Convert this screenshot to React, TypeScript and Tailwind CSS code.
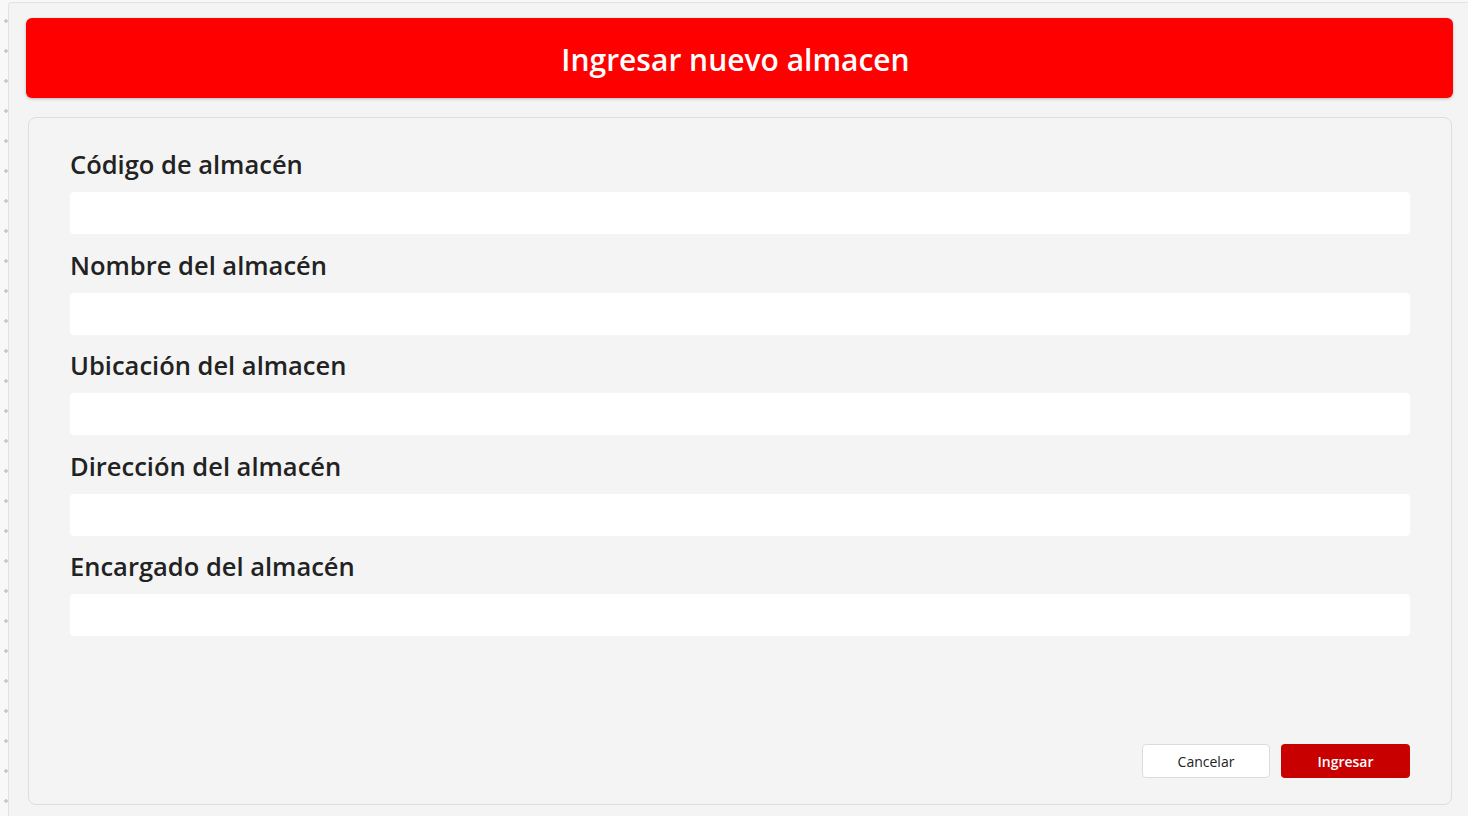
const fields = [
  "Código de almacén",
  "Nombre del almacén",
  "Ubicación del almacen",
  "Dirección del almacén",
  "Encargado del almacén",
];

export default function App() {
  return (
    <div className="h-[816px] w-full flex bg-[#f8f8f8] overflow-hidden font-['Open_Sans',sans-serif] pt-[2px]">
      {/* dotted ruler strip */}
      <div className="w-[8px] shrink-0 bg-[radial-gradient(circle,#c8c8c8_1.5px,transparent_2px)] bg-[length:12px_30px] bg-[position:0px_4px]" />

      <div className="flex-1 flex flex-col bg-[#f4f4f4] border-l border-t border-[#e2e2e2] rounded-tl-[4px] pt-[15px] pl-[17px] pr-[15px]">
        <div className="h-[80px] bg-[#ff0000] rounded-[6px] shadow-[0_1px_3px_rgba(0,0,0,0.25)] flex items-center justify-center pt-[3px] pr-[8px]">
          <h1 className="text-white text-[30px] font-semibold">Ingresar nuevo almacen</h1>
        </div>

        <div className="ml-[2px] mr-[1px] mt-[19px] h-[688px] border-[1.5px] border-[#dedede] rounded-[8px] bg-[#f4f4f4] flex flex-col pt-[29px] pb-[26px] px-[41px]">
          {fields.map((label) => (
            <div key={label} className="flex flex-col mb-[13.5px]">
              <label className="text-[25.5px] leading-[34px] text-[#222222] font-semibold">{label}</label>
              <input type="text" className="mt-[11px] h-[42px] w-full bg-white rounded-[4px] outline-none px-3" />
            </div>
          ))}

          <div className="flex-1" />

          <div className="flex justify-end gap-[11px]">
            <button className="w-[128px] h-[34px] bg-white border border-[#dcdcdc] rounded-[4px] text-[14px] text-[#222] font-medium">
              Cancelar
            </button>
            <button className="w-[129px] h-[34px] bg-[#c80000] rounded-[4px] text-[14px] text-white font-semibold">
              Ingresar
            </button>
          </div>
        </div>
      </div>
    </div>
  );
}
